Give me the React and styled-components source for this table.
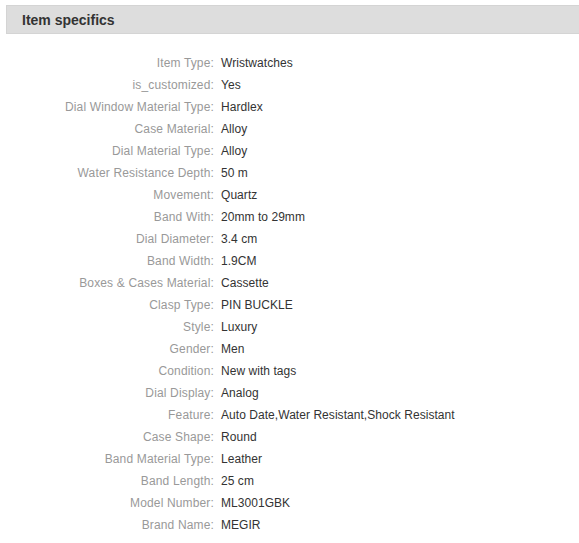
import React from "react";
import styled, { createGlobalStyle } from "styled-components";

const Global = createGlobalStyle`
  body {
    margin: 0;
    background: #fff;
    font-family: Arial, "Liberation Sans", sans-serif;
  }
`;

const Wrap = styled.div`
  padding: 5px 0 0 6px;
`;

const Header = styled.div`
  height: 29px;
  background: #dddddd;
  border: 1px solid #d4d4d4;
  border-right: none;
  box-sizing: border-box;
  display: flex;
  align-items: center;
  padding-left: 15px;
`;

const Title = styled.h2`
  margin: 0;
  font-size: 14px;
  font-weight: 700;
  color: #333;
`;

const Specs = styled.dl`
  display: grid;
  grid-template-columns: 208px 1fr;
  column-gap: 7px;
  grid-auto-rows: 22px;
  margin: 18px 0 0;
  font-size: 12px;
  align-items: center;
`;

const Key = styled.dt`
  text-align: right;
  color: #999;
  letter-spacing: 0.15px;
`;

const Val = styled.dd`
  margin: 0;
  color: #333;
  letter-spacing: 0.05px;
`;

const specs = [
  ["Item Type", "Wristwatches"],
  ["is_customized", "Yes"],
  ["Dial Window Material Type", "Hardlex"],
  ["Case Material", "Alloy"],
  ["Dial Material Type", "Alloy"],
  ["Water Resistance Depth", "50 m"],
  ["Movement", "Quartz"],
  ["Band With", "20mm to 29mm"],
  ["Dial Diameter", "3.4 cm"],
  ["Band Width", "1.9CM"],
  ["Boxes & Cases Material", "Cassette"],
  ["Clasp Type", "PIN BUCKLE"],
  ["Style", "Luxury"],
  ["Gender", "Men"],
  ["Condition", "New with tags"],
  ["Dial Display", "Analog"],
  ["Feature", "Auto Date,Water Resistant,Shock Resistant"],
  ["Case Shape", "Round"],
  ["Band Material Type", "Leather"],
  ["Band Length", "25 cm"],
  ["Model Number", "ML3001GBK"],
  ["Brand Name", "MEGIR"],
];

const App = () => (
  <Wrap>
    <Global />
    <Header>
      <Title>Item specifics</Title>
    </Header>
    <Specs>
      {specs.map(([k, v]) => (
        <React.Fragment key={k}>
          <Key>{k}:</Key>
          <Val>{v}</Val>
        </React.Fragment>
      ))}
    </Specs>
  </Wrap>
);

export default App;
